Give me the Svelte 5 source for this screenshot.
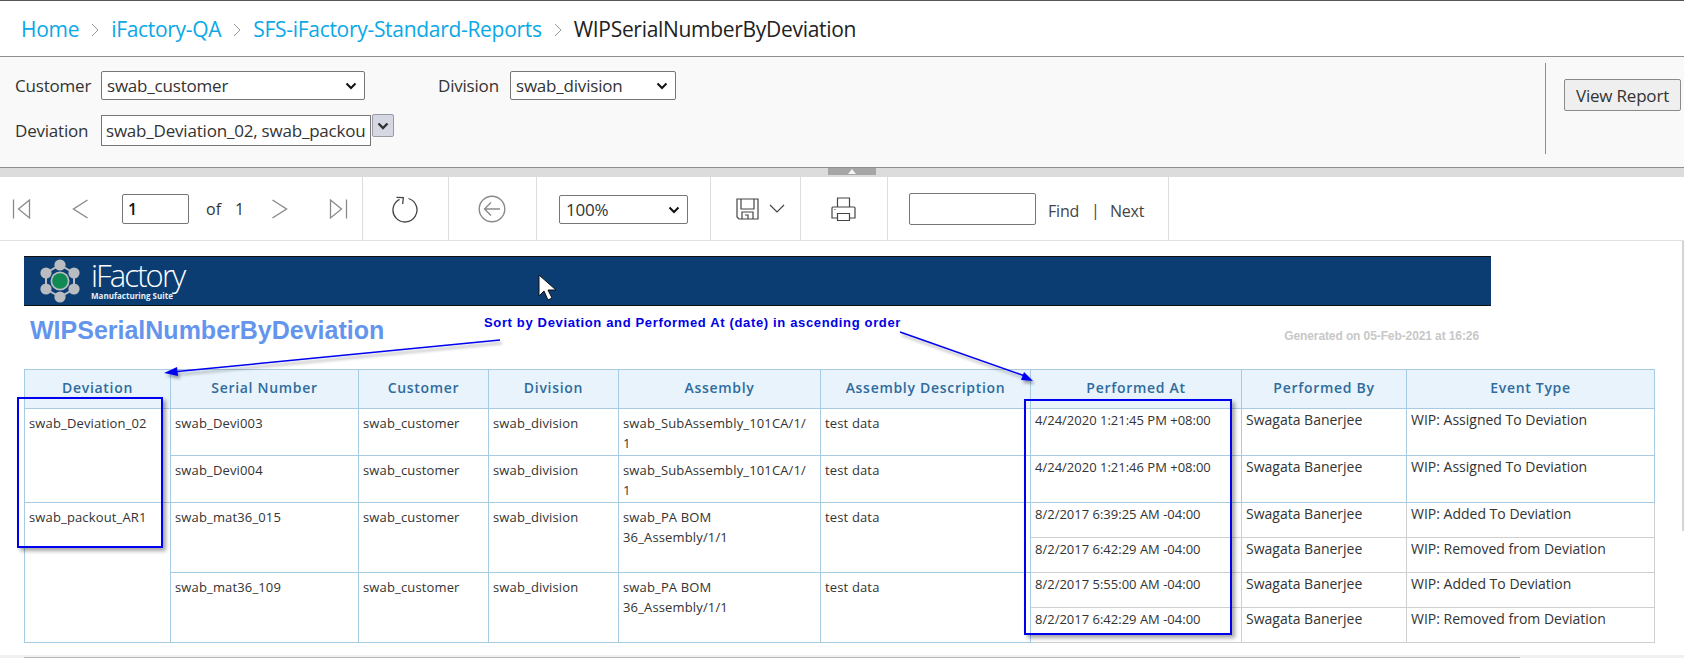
<script>
  const crumbs = ['Home', 'iFactory-QA', 'SFS-iFactory-Standard-Reports']
  const columns = ['Deviation', 'Serial Number', 'Customer', 'Division', 'Assembly', 'Assembly Description', 'Performed At', 'Performed By', 'Event Type']
  const widths = [146, 188, 130, 130, 202, 210, 211, 165, 248]

  const groups = [
    {
      deviation: 'swab_Deviation_02',
      serials: [
        { serial: 'swab_Devi003', assembly: 'swab_SubAssembly_101CA/1/1', events: [{ at: '4/24/2020 1:21:45 PM +08:00', type: 'WIP: Assigned To Deviation' }] },
        { serial: 'swab_Devi004', assembly: 'swab_SubAssembly_101CA/1/1', events: [{ at: '4/24/2020 1:21:46 PM +08:00', type: 'WIP: Assigned To Deviation' }] },
      ],
    },
    {
      deviation: 'swab_packout_AR1',
      serials: [
        {
          serial: 'swab_mat36_015',
          assembly: 'swab_PA BOM 36_Assembly/1/1',
          events: [
            { at: '8/2/2017 6:39:25 AM -04:00', type: 'WIP: Added To Deviation' },
            { at: '8/2/2017 6:42:29 AM -04:00', type: 'WIP: Removed from Deviation' },
          ],
        },
        {
          serial: 'swab_mat36_109',
          assembly: 'swab_PA BOM 36_Assembly/1/1',
          events: [
            { at: '8/2/2017 5:55:00 AM -04:00', type: 'WIP: Added To Deviation' },
            { at: '8/2/2017 6:42:29 AM -04:00', type: 'WIP: Removed from Deviation' },
          ],
        },
      ],
    },
  ]

  const span = (g) => g.serials.reduce((n, s) => n + s.events.length, 0)
</script>

<div class="page">
  <nav class="crumbs">
    {#each crumbs as c}
      <span class="crumb">{c}</span>
      <svg class="sep" width="8" height="14" viewBox="0 0 8 14"><path d="M1 1l6 6-6 6" fill="none" stroke="#999" /></svg>
    {/each}
    <span class="current">WIPSerialNumberByDeviation</span>
  </nav>

  <section class="params">
    <div class="fields">
      <div class="row first">
        <label class="lbl">Customer</label>
        <div class="select customer">swab_customer
          <svg width="12" height="8" viewBox="0 0 12 8"><path d="M1.5 1.500L6 6l4.500-4.500" fill="none" stroke="#111" stroke-width="2" /></svg>
        </div>
        <label class="lbl division-lbl">Division</label>
        <div class="select division">swab_division
          <svg width="12" height="8" viewBox="0 0 12 8"><path d="M1.5 1.500L6 6l4.500-4.500" fill="none" stroke="#111" stroke-width="2" /></svg>
        </div>
      </div>
      <div class="row second">
        <label class="lbl">Deviation</label>
        <div class="multi"><span>swab_Deviation_02, swab_packout_AR1</span></div>
        <div class="multi-btn">
          <svg width="12" height="8" viewBox="0 0 12 8"><path d="M1.5 1.500L6 6l4.500-4.500" fill="none" stroke="#333" stroke-width="2.400" /></svg>
        </div>
      </div>
    </div>
    <div class="action">
      <button class="view">View Report</button>
    </div>
  </section>

  <div class="splitter">
    <div class="handle"><svg width="8" height="5" viewBox="0 0 8 5"><path d="M4 0l4 5H0z" fill="#f4f4f4" /></svg></div>
  </div>

  <div class="toolbar">
    <div class="tb pager">
      <svg class="ic first-ic" width="22" height="22" viewBox="0 0 22 22" fill="none" stroke="#8a8a8a" stroke-width="1.300"><path d="M1.500 1.500v19M17.500 2L6.500 11l11 9z" /></svg>
      <svg class="ic prev" width="17" height="22" viewBox="0 0 17 22" fill="none" stroke="#8a8a8a" stroke-width="1.400"><path d="M15.500 2L1.500 11l14 9" /></svg>
      <input class="page-no" value="1" />
      <span class="of">of</span>
      <span class="total">1</span>
      <svg class="ic next" width="17" height="22" viewBox="0 0 17 22" fill="none" stroke="#8a8a8a" stroke-width="1.400"><path d="M1.500 2l14 9-14 9" /></svg>
      <svg class="ic last-ic" width="22" height="22" viewBox="0 0 22 22" fill="none" stroke="#8a8a8a" stroke-width="1.300"><path d="M20.500 1.500v19M4.500 2l11 9-11 9z" /></svg>
    </div>
    <div class="tb refresh">
      <svg width="26" height="28" viewBox="0 0 26 28" fill="none" stroke="#444" stroke-width="1.300">
        <path d="M16.500 3.500A12 12 0 1 1 7.500 4.300" />
        <path d="M4.500 2.300l6.800.3-.6 6.400" />
      </svg>
    </div>
    <div class="tb back">
      <svg width="28" height="28" viewBox="0 0 28 28" fill="none" stroke="#8a8a8a" stroke-width="1.400">
        <circle cx="14" cy="14" r="12.800" />
        <path d="M22 14H6.500M13 7.500L6.500 14l6.500 6.500" />
      </svg>
    </div>
    <div class="tb zoom">
      <div class="select zoom-sel">100%
        <svg width="12" height="8" viewBox="0 0 12 8"><path d="M1.5 1.500L6 6l4.500-4.500" fill="none" stroke="#111" stroke-width="2" /></svg>
      </div>
    </div>
    <div class="tb save">
      <svg width="23" height="22" viewBox="0 0 23 22" fill="none" stroke="#444" stroke-width="1.200">
        <path d="M1 1h21v20H3l-2-2z" />
        <path d="M5 1v10h13V1M6 21v-7h11v7M9 17h3v4" />
      </svg>
      <svg width="16" height="9" viewBox="0 0 16 9" fill="none" stroke="#444" stroke-width="1.200"><path d="M1 1l7 7 7-7" /></svg>
    </div>
    <div class="tb print">
      <svg width="25" height="24" viewBox="0 0 25 24" fill="none" stroke="#444" stroke-width="1.200">
        <path d="M6.500 10V1h12v9" />
        <path d="M6.500 21H1V11q0-1 1-1h21q1 0 1 1v10h-5.500" />
        <path d="M6.500 16.500h12v7h-12z" />
        <path d="M3.500 12.500h1" />
      </svg>
    </div>
    <div class="tb find">
      <input class="find-box" />
      <span class="link">Find</span>
      <span class="bar">|</span>
      <span class="link">Next</span>
    </div>
  </div>

  <main class="report">
    <div class="banner">
      <svg class="mark" width="40" height="44" viewBox="0 0 40 44">
        <path d="M20 6L34 14V30L20 38L6 30V14Z" fill="none" stroke="#b9bcc0" stroke-width="2" />
        <g fill="#b9bcc0">
          <circle cx="20" cy="6" r="5.600" />
          <circle cx="34" cy="14" r="5.600" />
          <circle cx="34" cy="30" r="5.600" />
          <circle cx="20" cy="38" r="5.600" />
          <circle cx="6" cy="30" r="5.600" />
          <circle cx="6" cy="14" r="5.600" />
        </g>
        <circle cx="20" cy="22" r="9.500" fill="#b9bcc0" />
        <circle cx="20" cy="22" r="7.800" fill="#0e8a52" />
      </svg>
      <div class="brand">
        <div class="brand-name">iFactory</div>
        <div class="brand-sub">Manufacturing Suite</div>
      </div>
    </div>

    <div class="head">
      <h1>WIPSerialNumberByDeviation</h1>
      <div class="generated">Generated on 05-Feb-2021 at 16:26</div>
    </div>

    <table>
      <colgroup>
        {#each widths as w}<col style="width:{w}px" />{/each}
      </colgroup>
      <thead>
        <tr>{#each columns as c}<th>{c}</th>{/each}</tr>
      </thead>
      <tbody>
        {#each groups as g}
          {#each g.serials as s, si}
            {#each s.events as e, ei}
              <tr class:tall={s.events.length === 1} class:short={s.events.length > 1}>
                {#if si === 0 && ei === 0}
                  <td rowspan={span(g)}>{g.deviation}</td>
                {/if}
                {#if ei === 0}
                  <td rowspan={s.events.length}>{s.serial}</td>
                  <td rowspan={s.events.length}>swab_customer</td>
                  <td rowspan={s.events.length}>swab_division</td>
                  <td class="asm" rowspan={s.events.length}>{s.assembly}</td>
                  <td rowspan={s.events.length}>test data</td>
                {/if}
                <td class="ev" class:grey={s.events.length > 1}>{e.at}</td>
                <td class="ev wide" class:grey={s.events.length > 1}>Swagata Banerjee</td>
                <td class="ev wide" class:grey={s.events.length > 1}>{e.type}</td>
              </tr>
            {/each}
          {/each}
        {/each}
      </tbody>
    </table>

    <!-- review markup pasted over the report -->
    <div class="note">Sort by Deviation and Performed At (date) in ascending order</div>
    <div class="box box-dev"></div>
    <div class="box box-at"></div>
    <svg class="arrows" width="1684" height="414" viewBox="0 241 1684 414">
      <defs>
        <filter id="soft" x="-10%" y="-50%" width="120%" height="200%">
          <feDropShadow dx="2" dy="3" stdDeviation="1.500" flood-color="#000" flood-opacity="0.35" />
        </filter>
      </defs>
      <g filter="url(#soft)">
        <path d="M500 340L172 372" stroke="#0000f0" stroke-width="1.500" fill="none" />
        <path d="M164 373l13-6 1 9z" fill="#0000f0" />
        <path d="M900 332L1025 376" stroke="#0000f0" stroke-width="1.500" fill="none" />
        <path d="M1033 381l-12-1 3-8z" fill="#0000f0" />
      </g>
    </svg>
    <svg class="cursor" width="20" height="28" viewBox="0 0 20 28">
      <path d="M1 1v21l5-5 4 9 4-2-4-8h8z" fill="#fff" stroke="#111" stroke-width="1" />
    </svg>
  </main>

  <div class="hscroll"><div class="thumb"></div></div>
  <div class="vscroll"></div>
</div>

<style>
  :global(body) {
    margin: 0;
    background: #fff;
    overflow: hidden;
  }

  .page {
    position: relative;
    width: 1684px;
    height: 658px;
    overflow: hidden;
    font-family: "Open Sans", "Noto Sans", sans-serif;
    color: #333;
    border-top: 1px solid #555;
    box-sizing: border-box;
  }

  .crumbs {
    height: 55px;
    display: flex;
    align-items: center;
    padding-left: 21px;
    border-bottom: 1px solid #8f8f8f;
    font-size: 21px;
  }
  .crumb { color: #0aa8e6; letter-spacing: -0.3px; }
  .sep { margin: 2px 12px 0 12px; }
  .current { color: #222; letter-spacing: -0.3px; }

  .params {
    height: 110px;
    display: flex;
    background: #f9f9f9;
    border-bottom: 1px solid #8f8f8f;
    font-size: 17px;
    color: #333;
  }
  .fields { flex: 1; padding-left: 15px; }
  .row { display: flex; align-items: flex-start; }
  .row.first { padding-top: 14px; }
  .row.second { padding-top: 15px; }
  .lbl { width: 86px; line-height: 29px; letter-spacing: -0.2px; }
  .row.second .lbl { line-height: 31px; }
  .division-lbl { margin-left: 73px; width: 72px; }

  .select {
    display: flex;
    align-items: center;
    justify-content: space-between;
    box-sizing: border-box;
    height: 29px;
    padding: 0 7px 0 5px;
    background: #fff;
    border: 1px solid #767676;
    border-radius: 2px;
    font-size: 17px;
    letter-spacing: -0.2px;
    color: #333;
  }
  .customer { width: 264px; }
  .division { width: 166px; }

  .multi {
    box-sizing: border-box;
    width: 270px;
    height: 31px;
    padding: 0 4px;
    background: #fff;
    border: 1px solid #767676;
    line-height: 29px;
    overflow: hidden;
    white-space: nowrap;
    letter-spacing: -0.2px;
  }
  .multi span { display: block; overflow: hidden; }
  .multi-btn {
    box-sizing: border-box;
    width: 22px;
    height: 23px;
    margin: -1px 0 0 1px;
    display: flex;
    align-items: center;
    justify-content: center;
    background: #d5d7e2;
    border: 1px solid #9a9aa6;
    border-radius: 2px;
  }

  .action {
    width: 139px;
    margin: 6px 0 13px;
    border-left: 1px solid #8f8f8f;
    padding: 16px 0 0 18px;
    box-sizing: border-box;
  }
  .view {
    width: 117px;
    height: 32px;
    padding: 0;
    font: 17px "Open Sans", sans-serif;
    letter-spacing: -0.2px;
    color: #333;
    background: #efefef;
    border: 1px solid #8a8a8a;
    border-radius: 2px;
  }

  .splitter {
    height: 9px;
    background: #dcdcdc;
    display: flex;
    justify-content: center;
    padding-left: 19px;
  }
  .handle {
    width: 48px;
    height: 7px;
    background: #a6a6a6;
    display: flex;
    justify-content: center;
    align-items: center;
  }

  .toolbar {
    height: 63px;
    display: flex;
    background: #fff;
    border-bottom: 1px solid #e2e2e2;
    font-size: 16px;
  }
  .tb {
    display: flex;
    align-items: center;
    box-sizing: border-box;
    border-right: 1px solid #dedede;
    height: 63px;
  }
  .pager { width: 363px; padding-left: 12px; }
  .prev { margin-left: 38px; }
  .page-no {
    box-sizing: border-box;
    width: 67px;
    height: 30px;
    margin-left: 33px;
    padding: 0 5px;
    border: 1px solid #767676;
    border-radius: 2px;
    font: 600 16px "Open Sans", sans-serif;
    color: #111;
    outline: none;
  }
  .of { margin-left: 17px; }
  .total { margin-left: 14px; }
  .next { margin-left: 27px; }
  .last-ic { margin-left: 38px; }

  .refresh { width: 86px; justify-content: center; padding-right: 2px; }
  .back { width: 88px; justify-content: center; padding-right: 2px; }
  .zoom { width: 174px; padding-left: 22px; }
  .zoom-sel { width: 129px; height: 29px; margin-top: 2px; padding-left: 6px; font-size: 17px; }
  .save { width: 90px; padding-left: 25px; gap: 10px; }
  .print { width: 87px; padding-left: 30px; }
  .find { width: 281px; padding-left: 21px; color: #444; }
  .find-box {
    box-sizing: border-box;
    width: 127px;
    height: 32px;
    border: 1px solid #767676;
    border-radius: 2px;
    outline: none;
  }
  .link { letter-spacing: -0.2px; margin-top: 4px; }
  .find .link:first-of-type { margin-left: 12px; }
  .bar { margin: 2px 10px 0 12px; }

  .report {
    position: relative;
    height: 414px;
    padding-left: 24px;
    padding-top: 15px;
    box-sizing: border-box;
  }

  .banner {
    width: 1467px;
    height: 50px;
    box-sizing: border-box;
    display: flex;
    align-items: center;
    padding-left: 16px;
    background: #0b3d72;
    border-top: 1px solid #111;
    border-bottom: 1px solid #111;
  }
  .brand { margin-left: 11px; color: #fff; margin-top: -3px; }
  .brand-name {
    font: 300 31px/31px "Open Sans", sans-serif;
    letter-spacing: -1.900px;
  }
  .brand-sub {
    font: 700 8px/9px "Open Sans", sans-serif;
    color: #e8eef4;
  }

  .head {
    width: 1449px;
    height: 63px;
    display: flex;
    justify-content: space-between;
    padding-left: 6px;
  }
  h1 {
    margin: 9px 0 0;
    font: 700 25px/30px "Liberation Sans", Arial, sans-serif;
    color: #6495ed;
  }
  .generated {
    margin-top: 22px;
    font: 700 12px/16px "Liberation Sans", Arial, sans-serif;
    letter-spacing: -0.1px;
    color: #c8c8c8;
  }

  table {
    width: 1630px;
    table-layout: fixed;
    border-collapse: collapse;
    font-size: 13px;
    line-height: 20px;
    color: #333;
  }
  th {
    height: 36px;
    padding: 0 0 2px;
    background: #e8f3fc;
    border: 1px solid #a6cbe3;
    font-size: 14px;
    font-weight: 600;
    letter-spacing: 0.7px;
    color: #2f6b9c;
  }
  td {
    padding: 4px 4px 0;
    border: 1px solid #a6cbe3;
    vertical-align: top;
    overflow-wrap: anywhere;
    letter-spacing: 0.15px;
  }
  td.asm { padding-right: 9px; }
  td.ev { padding-top: 1px; letter-spacing: 0; }
  td.wide { font-size: 14px; }
  td.grey { border-color: #cfcfcf; }
  tr.tall td { height: 42px; }
  tr.short td.ev { height: 33px; }

  .note {
    position: absolute;
    left: 484px;
    top: 74px;
    font: 700 13px/16px "Liberation Sans", Arial, sans-serif;
    letter-spacing: 0.65px;
    color: #0000e6;
    white-space: nowrap;
  }
  .box {
    position: absolute;
    box-sizing: border-box;
    border: 2px solid #0000f0;
    box-shadow: 3px 3px 4px rgba(0, 0, 0, 0.35);
  }
  .box-dev { left: 17px; top: 156px; width: 146px; height: 151px; }
  .box-at { left: 1024px; top: 158px; width: 208px; height: 236px; }
  .arrows { position: absolute; left: 0; top: 0; pointer-events: none; }
  .cursor { position: absolute; left: 538px; top: 33px; }

  .hscroll {
    position: absolute;
    left: 0;
    right: 0;
    bottom: 0;
    height: 3px;
    background: #f0f0f0;
  }
  .thumb { margin: 2px 0 0 24px; width: 1496px; height: 1px; background: #b8b8b8; }
  .vscroll {
    position: absolute;
    right: 0;
    top: 240px;
    width: 2px;
    height: 290px;
    background: #d4d4d4;
  }
</style>
